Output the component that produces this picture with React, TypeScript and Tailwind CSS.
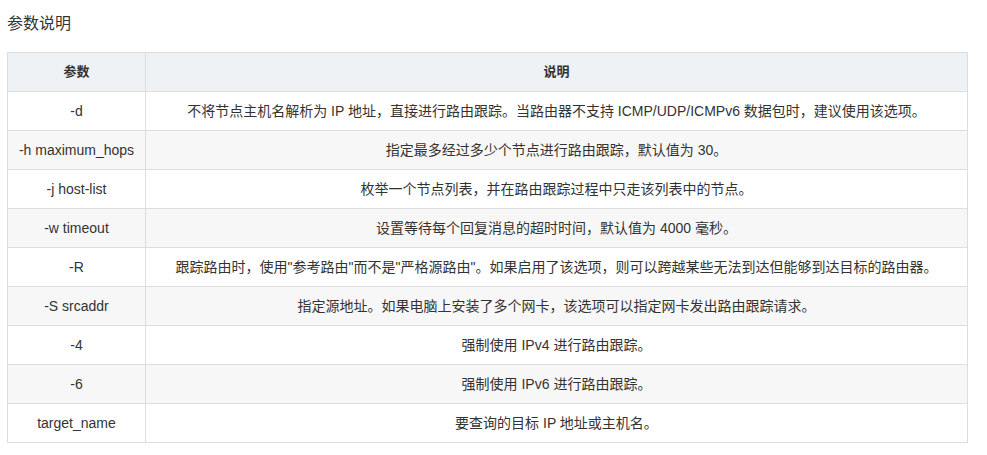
import React from 'react';

const rows = [
  ['-d', '不将节点主机名解析为 IP 地址，直接进行路由跟踪。当路由器不支持 ICMP/UDP/ICMPv6 数据包时，建议使用该选项。'],
  ['-h maximum_hops', '指定最多经过多少个节点进行路由跟踪，默认值为 30。'],
  ['-j host-list', '枚举一个节点列表，并在路由跟踪过程中只走该列表中的节点。'],
  ['-w timeout', '设置等待每个回复消息的超时时间，默认值为 4000 毫秒。'],
  ['-R', '跟踪路由时，使用"参考路由"而不是"严格源路由"。如果启用了该选项，则可以跨越某些无法到达但能够到达目标的路由器。'],
  ['-S srcaddr', '指定源地址。如果电脑上安装了多个网卡，该选项可以指定网卡发出路由跟踪请求。'],
  ['-4', '强制使用 IPv4 进行路由跟踪。'],
  ['-6', '强制使用 IPv6 进行路由跟踪。'],
  ['target_name', '要查询的目标 IP 地址或主机名。'],
];

const App = () => {
  return (
    <div
      className="w-[987px] h-[455px] bg-white text-[#333] pl-[7px]"
      style={{ fontFamily: '"Liberation Sans", "Noto Sans CJK SC", sans-serif' }}
    >
      <h3 className="pt-[14px] text-[16px] leading-[20px] mb-[18px] font-normal">参数说明</h3>
      <table className="w-[961px] border-collapse border border-[#ddd] text-[14px] text-center">
        <thead>
          <tr className="h-[39px] bg-[#eef2f5]">
            <th className="w-[138px] border border-[#ddd] font-bold text-[13px]">参数</th>
            <th className="border border-[#ddd] font-bold text-[13px]">说明</th>
          </tr>
        </thead>
        <tbody>
          {rows.map(([param, desc], i) => (
            <tr key={param} className={i % 2 === 1 ? 'h-[39px] bg-[#f7f7f7]' : 'h-[39px] bg-white'}>
              <td className="border border-[#ddd]">{param}</td>
              <td className="border border-[#ddd]">{desc}</td>
            </tr>
          ))}
        </tbody>
      </table>
    </div>
  );
};

export default App;
